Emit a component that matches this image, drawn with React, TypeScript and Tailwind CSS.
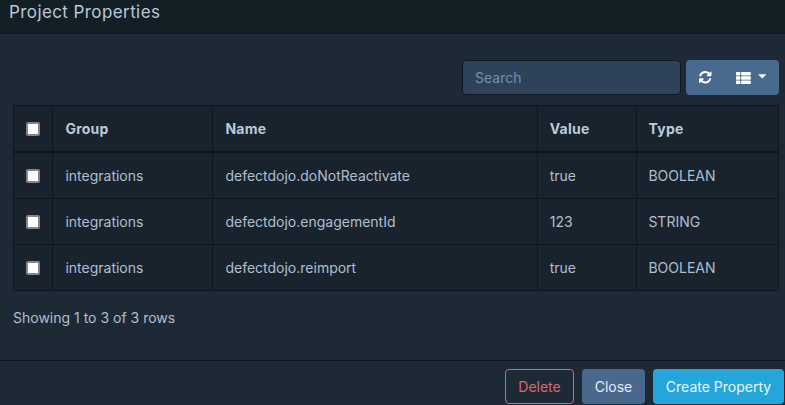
const rows = [
  { group: 'integrations', name: 'defectdojo.doNotReactivate', value: 'true', type: 'BOOLEAN' },
  { group: 'integrations', name: 'defectdojo.engagementId', value: '123', type: 'STRING' },
  { group: 'integrations', name: 'defectdojo.reimport', value: 'true', type: 'BOOLEAN' },
];

function Check() {
  return (
    <button
      type="button"
      role="checkbox"
      aria-checked="false"
      aria-label="Select row"
      className="block size-[14px] rounded-[2px] border-2 border-[#85838f] bg-white"
    />
  );
}

function RefreshIcon() {
  return (
    <svg viewBox="0 0 1536 1536" className="size-[12.5px]" fill="currentColor">
      <path d="M1511 928q0 5-1 7-64 268-268 434.5t-478 166.5q-146 0-282.5-55t-243.5-157l-129 129q-19 19-45 19t-45-19-19-45v-448q0-26 19-45t45-19h448q26 0 45 19t19 45-19 45l-137 137q71 66 161 102t187 36q134 0 250-65t186-179q11-17 53-117 8-23 30-23h192q13 0 22.500 9.500t9.500 22.500zm25-800v448q0 26-19 45t-45 19h-448q-26 0-45-19t-19-45 19-45l138-138q-148-137-349-137-134 0-250 65t-186 179q-11 17-53 117-8 23-30 23h-199q-13 0-22.500-9.500t-9.500-22.500v-7q65-268 270-434.500t480-166.500q146 0 284 55.500t245 156.500l130-129q19-19 45-19t45 19 19 45z" />
    </svg>
  );
}

function ListIcon() {
  return (
    <svg viewBox="0 0 15 12" className="h-3 w-[15px]" fill="currentColor">
      {[0, 4.3, 8.6].map((y) => (
        <g key={y}>
          <rect x="0" y={y} width="4.3" height="3.4" rx="0.6" />
          <rect x="5.1" y={y} width="9.7" height="3.4" rx="0.6" />
        </g>
      ))}
    </svg>
  );
}

const cell = 'border-r border-[#0d161e] pl-[12.4px]';

export default function App() {
  return (
    <div className="flex h-[405px] w-[785px] flex-col overflow-hidden bg-[#1d2a36] font-['Inter',sans-serif] text-[14px] text-[#b0bfd0]">
      <header className="h-[34px] shrink-0 border-b border-[#0e181f] bg-[#131e25] pl-[9px] text-[17px] leading-[24px] tracking-[0.41px] text-[#b9c7da]">
        Project Properties
      </header>

      <main className="h-[326px] shrink-0 pt-[25px] pr-[6px] pl-[13px]">
        <div className="flex h-[36px] justify-end gap-[5px]">
          <input
            type="text"
            placeholder="Search"
            className="mt-px h-[35px] w-[219px] rounded-[4px] border border-[#101a22] bg-[#2e425a] px-3 text-[14px] outline-none placeholder:text-[#7290b1]"
          />
          <div className="mt-px flex h-[35px] w-[93px] items-center rounded-[4px] bg-[#486a8e] pl-[13px] text-white">
            <RefreshIcon />
            <span className="ml-[24.5px] flex items-center gap-[7px]">
              <ListIcon />
              <svg viewBox="0 0 8 4" className="-mt-[2px] h-[4.5px] w-[8.5px]" fill="currentColor">
                <path d="M0 0h8L4 4z" />
              </svg>
            </span>
          </div>
        </div>

        <div className="mt-[10px] w-[766px] border border-r-0 border-[#0d161e] bg-[#18232e]">
          <div className="grid h-[47px] grid-cols-[39px_160px_325px_99px_142px] border-b-2 border-[#0c131b] leading-[46px] font-bold tracking-[0.25px] text-[#bccadb]">
            <div className="flex items-center border-r border-[#0d161e] pl-3">
              <Check />
            </div>
            <div className={cell}>Group</div>
            <div className={cell}>Name</div>
            <div className="border-r border-[#0d161e] pl-[11.7px]">Value</div>
            <div className="border-r border-[#0d161e] pl-[11.6px]">Type</div>
          </div>
          {rows.map((r) => (
            <div
              key={r.name}
              className="grid h-[46px] grid-cols-[39px_160px_325px_99px_142px] border-b border-[#0d161e] leading-[46px] last:h-[45px] last:border-b-0"
            >
              <div className="flex items-center border-r border-[#0d161e] pb-px pl-3">
                <Check />
              </div>
              <div className={cell}>{r.group}</div>
              <div className={cell}>{r.name}</div>
              <div className="border-r border-[#0d161e] pl-[11.7px]">{r.value}</div>
              <div className="border-r border-[#0d161e] pl-[11.4px]">{r.type}</div>
            </div>
          ))}
        </div>
        <p className="mt-[16px] leading-[21px]">Showing 1 to 3 of 3 rows</p>
      </main>

      <footer className="flex h-[45px] items-start justify-end gap-2 border-t border-[#0d161e] pt-2 pr-px text-[14px]">
        <button className="h-[35px] w-[69px] rounded-[4px] border border-[#de646b] text-[#de646b]">Delete</button>
        <button className="h-[35px] w-[63px] rounded-[4px] bg-[#48698d] text-[#e7edf5]">Close</button>
        <button className="h-[35px] w-[131px] rounded-[4px] bg-[#25a6db] text-[#eaf6fc]">Create Property</button>
      </footer>
    </div>
  );
}
